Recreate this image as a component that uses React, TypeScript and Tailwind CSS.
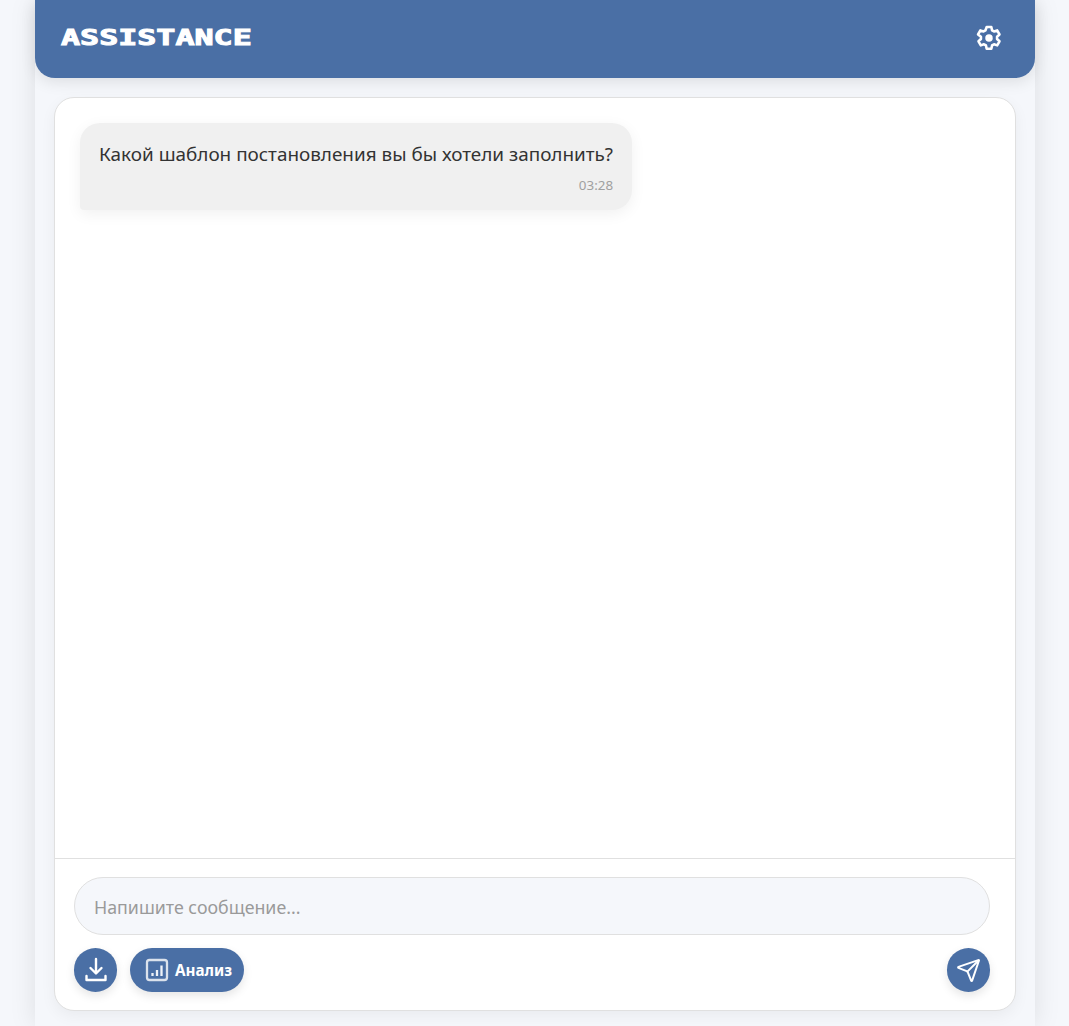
import { Send } from 'lucide-react';

function Gear() {
  return (
    <svg width="28" height="28" viewBox="0 0 24 24" fill="none" stroke="currentColor" strokeWidth="2.2" strokeLinejoin="round">
      <path d="M10 2.600h4l.6 2.800 1.700 1 2.700-.9 2 3.500-2.100 1.900v2l2.100 1.900-2 3.500-2.700-.9-1.700 1-.6 2.800h-4l-.6-2.800-1.700-1-2.700.9-2-3.500 2.100-1.900v-2L2.600 9l2-3.500 2.700.9 1.700-1z" />
      <circle cx="12" cy="12" r="3.200" fill="currentColor" stroke="none" />
    </svg>
  );
}

function DownloadIcon() {
  return (
    <svg width="24" height="26" viewBox="0 0 24 26" fill="none" stroke="currentColor" strokeWidth="2.400" strokeLinecap="round" strokeLinejoin="round">
      <path d="M12 2v14M6.500 11l5.500 5.500 5.500-5.500" />
      <path d="M2.500 19v4h19v-4" />
    </svg>
  );
}

function AnalysisIcon() {
  return (
    <svg width="24" height="24" viewBox="0 0 24 24" fill="none" stroke="#dbe2ec" strokeWidth="2.300" strokeLinejoin="round">
      <rect x="2" y="2" width="20" height="20" rx="2.500" />
      <path d="M7.500 15v3M12 12v6M16.500 7.500V18" stroke="#eef2f7" />
    </svg>
  );
}

export default function App() {
  return (
    <div className="min-h-[1026px] bg-[#f5f7fb] font-['Noto_Sans','Open_Sans',sans-serif]">
      <div className="mx-auto flex h-[1026px] w-[1000px] flex-col bg-[#f5f7fb] shadow-[0_0_25px_rgba(0,0,0,0.1)]">
        <header className="flex h-[78px] shrink-0 items-center justify-between rounded-b-[20px] bg-[#4a6fa5] pl-[26px] pr-[32px] pb-[3px] shadow-[0_4px_15px_rgba(0,0,0,0.1)]">
          <h1 className="origin-left scale-x-[1.44] font-['DejaVu_Sans_Mono',monospace] text-[22px] font-bold text-white [-webkit-text-stroke:1px_white]">ASSISTANCE</h1>
          <button className="text-white"><Gear /></button>
        </header>

        <main className="ml-[19.5px] mr-[18.5px] mt-[19px] flex h-[914px] flex-col rounded-[20px] border border-[#e0e0e0] bg-white shadow-[0_5px_15px_rgba(0,0,0,0.05)]">
          <div className="flex-1 p-[25px] pb-0">
            <div className="w-fit rounded-[20px] rounded-bl-[4px] bg-[#f0f0f0] px-[19px] pb-[16px] pt-[17px] shadow-[0_4px_15px_rgba(0,0,0,0.06)]">
              <p className="text-[18.9px] leading-[28px] text-[#333333]">Какой шаблон постановления вы бы хотели заполнить?</p>
              <p className="mt-[8px] text-right text-[13.4px] leading-[18px] text-[#a0a0a0]">03:28</p>
            </div>
          </div>

          <div className="border-t border-[#e0e0e0] pl-[19px] pr-[25px] pt-[18px]">
            <div className="flex h-[58px] items-center rounded-[29px] border border-[#e0e0e0] bg-[#f5f7fb] px-[19px] pt-[2px] text-[17.8px] text-[#9a9a9a]">
              Напишите сообщение...
            </div>
            <div className="mt-[13px] flex items-center justify-between pb-[18px]">
              <div className="flex items-center gap-[13px]">
                <button className="flex h-[44px] w-[43px] items-center justify-center rounded-full bg-[#4a6fa5] text-white shadow-[0_4px_10px_rgba(0,0,0,0.1)]">
                  <DownloadIcon />
                </button>
                <button className="flex h-[44px] items-center gap-[6px] rounded-[22px] bg-[#4a6fa5] pl-[15px] pr-[12px] text-white shadow-[0_4px_10px_rgba(0,0,0,0.1)]">
                  <AnalysisIcon />
                  <span className="mt-[1px] text-[15.2px] font-bold">Анализ</span>
                </button>
              </div>
              <button className="flex h-[44px] w-[43px] items-center justify-center rounded-full bg-[#4a6fa5] text-white shadow-[0_4px_10px_rgba(0,0,0,0.1)]">
                <Send size={25} strokeWidth={1.9} />
              </button>
            </div>
          </div>
        </main>
      </div>
    </div>
  );
}
